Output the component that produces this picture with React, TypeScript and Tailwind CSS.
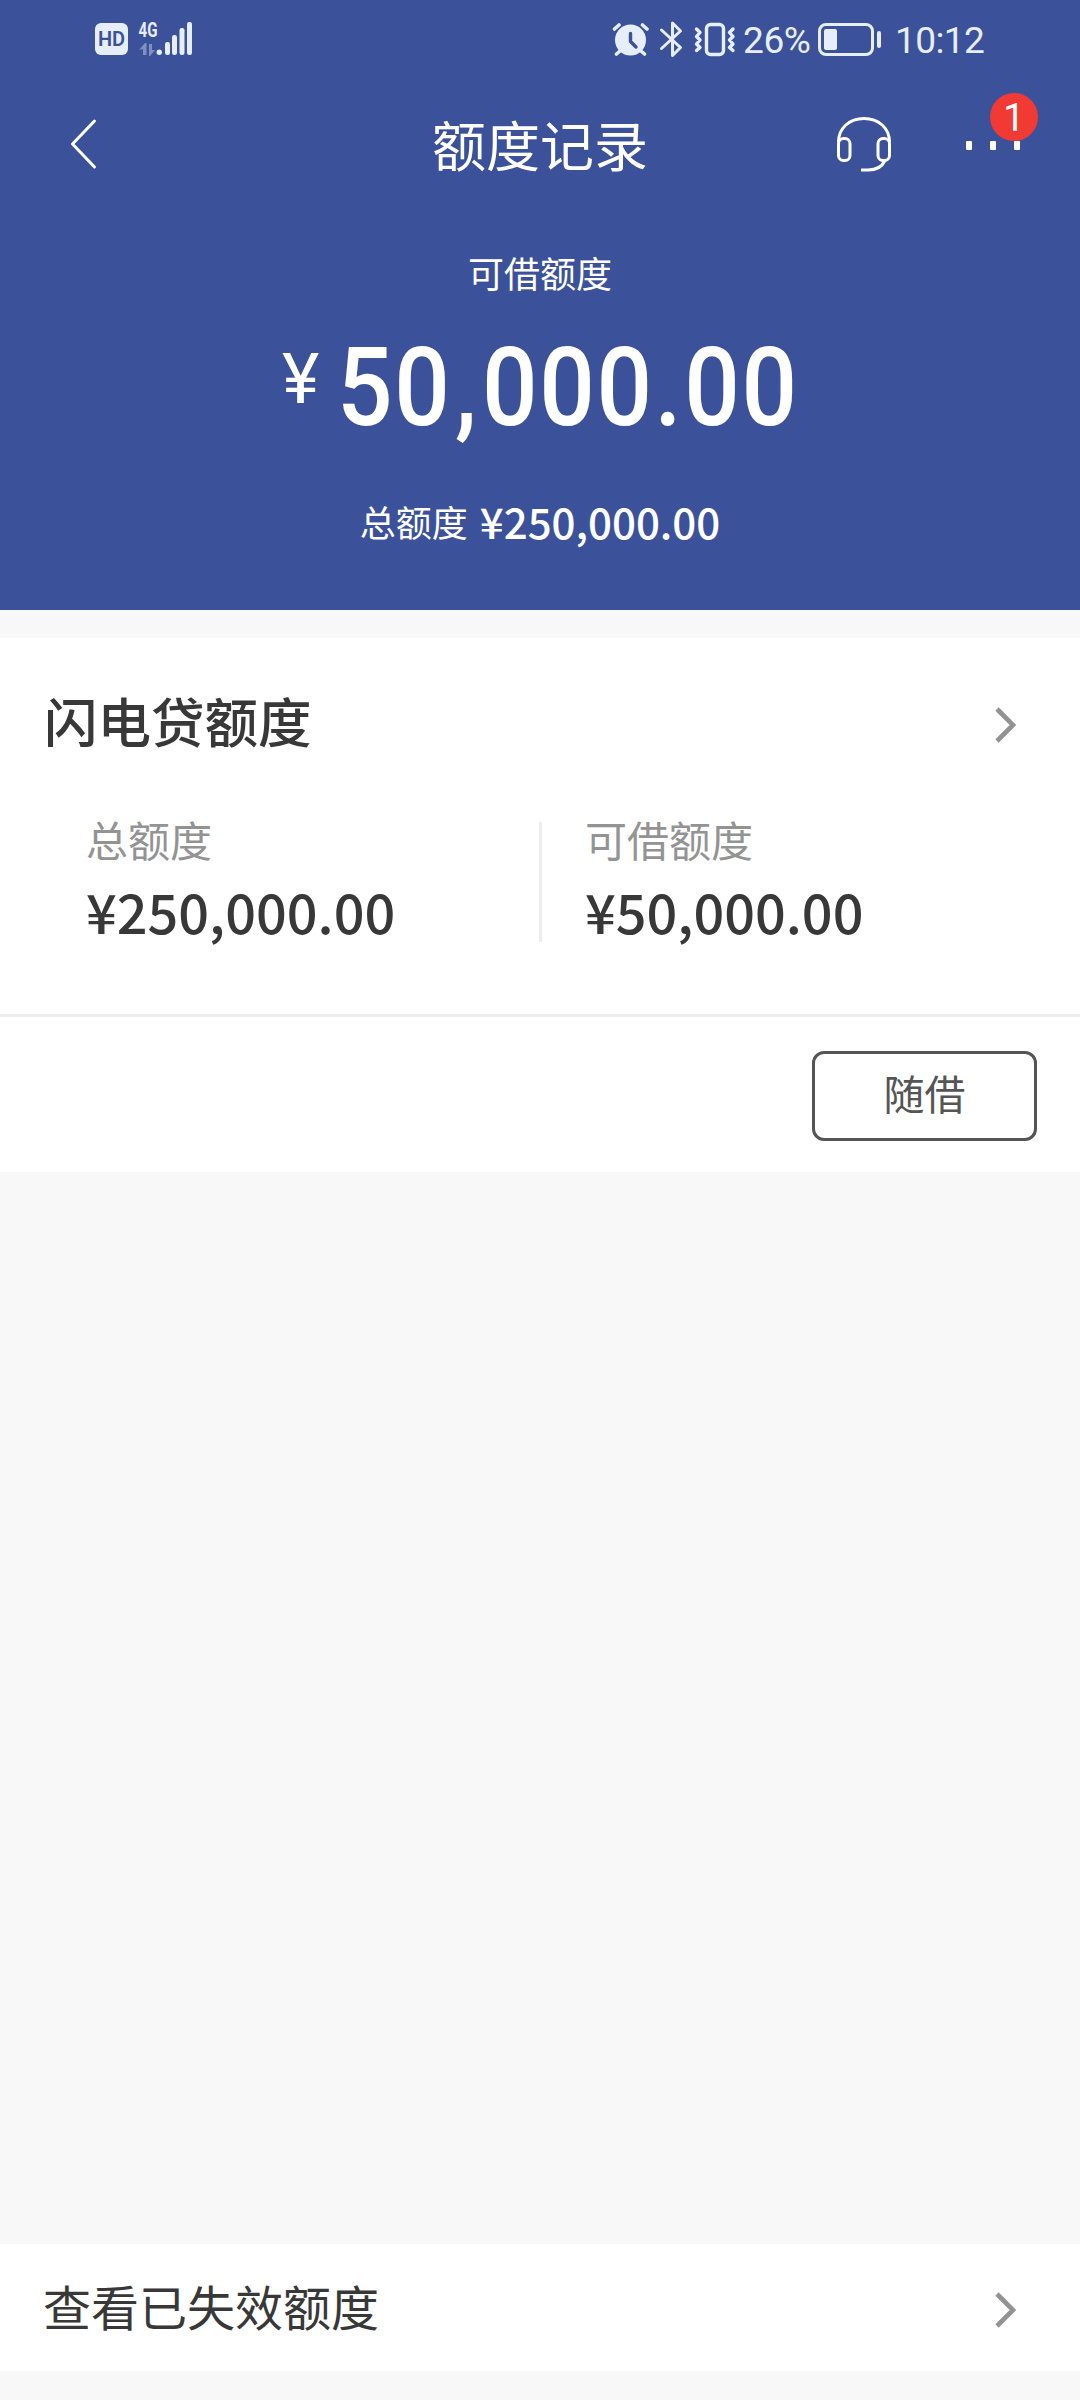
import React from 'react';

const StatusBar: React.FC = () => (
  <div className="flex h-[78px] items-center pl-[95px] pr-[95px] text-[#e6edfb]">
    <div className="flex h-8 w-[33px] items-center justify-center rounded-[6px] bg-[#e6edfb]">
      <span className="font-[Roboto] text-[20px] leading-none font-semibold text-[#3b529b]">HD</span>
    </div>
    <svg className="ml-[9px]" width="56" height="52" viewBox="137 13 56 52" fill="currentColor">
      <text x="138.500" y="37" fontFamily="Roboto" fontSize="21" fontWeight="700" textLength="19" lengthAdjust="spacingAndGlyphs">4G</text>
      <path opacity=".4" d="M139 50l6-7h1.500v12h-3.500v-6zM149 44h3v6h3l-5 6h-1z" />
      <circle cx="159.300" cy="52.300" r="2.700" />
      <rect x="165" y="42" width="5" height="13" rx="2.200" />
      <rect x="172" y="35" width="5" height="20" rx="2.200" />
      <rect x="179.500" y="28" width="5" height="27" rx="2.200" />
      <rect x="187" y="22" width="5" height="33" rx="2.200" />
    </svg>
    <div className="ml-auto flex items-center font-[Roboto]">
      <svg width="124" height="38" viewBox="612 20 124 38" fill="none" stroke="currentColor" strokeLinecap="round" strokeLinejoin="round">
        {/* alarm */}
        <circle cx="630.500" cy="40" r="15.500" fill="currentColor" stroke="none" />
        <path strokeWidth="3.600" d="M614.500 29l4.500-4M642.500 25l4.500 4M620 51l-3.500 3M641 51l3.500 3" />
        <path stroke="#3b529b" strokeWidth="3.400" d="M630.500 33.500v8l5.500 5.500" />
        {/* bluetooth */}
        <path strokeWidth="3" d="M661.500 30l19 17.500-8 8V23l8 8-19 17.500" />
        {/* vibrate */}
        <rect x="706.500" y="24.500" width="17" height="30" rx="4" strokeWidth="3.400" />
        <path strokeWidth="3.400" d="M696.500 29l3.500 3.500-3.500 4 3.500 3.500-3.500 4 3.500 3.500-3.500 3M733 29l-3.500 3.500 3.500 4-3.500 3.500 3.500 4-3.500 3.500 3.500 3" />
      </svg>
      <span className="ml-[7px] w-[69px] pt-[2px] text-[37px] leading-none tracking-[-0.4px] whitespace-nowrap">26%</span>
      <svg className="ml-[5px]" width="64" height="34" viewBox="817 22 64 34" fill="none" stroke="currentColor">
        <rect x="819.500" y="24.500" width="53" height="30" rx="6.500" strokeWidth="3" />
        <rect x="824" y="29" width="13" height="21" rx="2" fill="currentColor" stroke="none" />
        <rect x="877" y="31" width="4" height="17" rx="2" fill="currentColor" stroke="none" />
      </svg>
      <span className="ml-[14px] w-[90px] pt-[3px] text-[37px] leading-none tracking-[-0.6px] whitespace-nowrap">10:12</span>
    </div>
  </div>
);

const NavBar: React.FC = () => (
  <div className="grid h-[132px] grid-cols-[1fr_auto_1fr] items-center pr-[42px] pl-[70px]">
    <button aria-label="返回">
      <svg width="28" height="52" viewBox="70 118 28 52" fill="none" stroke="currentColor" strokeWidth="3" strokeLinecap="round" strokeLinejoin="round">
        <path d="M94.500 121L72.500 144l22 23" />
      </svg>
    </button>
    <h1 className="-ml-[28px] pb-[1px] text-[54px] leading-[56px]">额度记录</h1>
    <div className="flex items-center justify-end">
      <button aria-label="客服">
        <svg width="58" height="58" viewBox="835 115 58 58" fill="none" stroke="currentColor" strokeWidth="3">
          <path d="M838.500 142c0-14 11-23.500 25.500-23.500s25.500 9.500 25.500 23.500" />
          <rect x="838.500" y="138.500" width="11.500" height="22" rx="5" />
          <rect x="878" y="138.500" width="11.500" height="22" rx="5" />
          <path d="M885 160.500c-3 6.500-9 9.500-17 9.500h-7" />
        </svg>
      </button>
      <button className="relative top-[1px] ml-[73px] flex w-[72px] gap-[18px]" aria-label="更多">
        <span className="h-[9px] w-[6px] rounded-[1px] bg-white" />
        <span className="h-[9px] w-[6px] rounded-[1px] bg-white" />
        <span className="h-[9px] w-[6px] rounded-[1px] bg-white" />
        <span className="absolute -top-[48px] left-[24px] flex size-12 items-center justify-center rounded-full bg-[#f23a34] pt-[2px] font-[Roboto] text-[38px] leading-none">
          1
        </span>
      </button>
    </div>
  </div>
);

const Chevron: React.FC = () => (
  <svg className="relative top-[2px]" width="24" height="38" viewBox="0 0 24 38" fill="none" stroke="#939393" strokeWidth="4.600">
    <path d="M3 3l16 16L3 35" />
  </svg>
);

interface AmountProps {
  label: string;
  value: string;
}

const Amount: React.FC<AmountProps> = ({ label, value }) => (
  <div className="flex flex-col">
    <span className="text-[42px] leading-[48px] text-[#939393]">{label}</span>
    <span className="mt-[20px] text-[54px] leading-[56px] font-medium text-[#383838]">{value}</span>
  </div>
);

const App: React.FC = () => (
  <div className="flex h-[2400px] w-[1080px] flex-col bg-[#f8f8f8] font-['Noto_Sans_CJK_SC',sans-serif]">
    <header className="h-[610px] bg-[#3b529b] text-white">
      <StatusBar />
      <NavBar />
      <div className="flex flex-col items-center pt-[40px]">
        <span className="text-[36px] leading-[44px]">可借额度</span>
        <div className="mt-[43px] flex h-[100px] w-[516px] items-start font-[Roboto] font-medium">
          <span className="w-[55px] shrink-0 text-[71px] leading-[84px] font-normal">¥</span>
          <span className="origin-left scale-x-[0.89] pt-[1px] text-[110px] leading-[100px] tracking-[1.900px] whitespace-nowrap">
            50<span className="inline-block w-[34px] text-center">,</span>
            000<span className="inline-block w-[34px] text-center">.</span>
            00
          </span>
        </div>
        <div className="mt-[58px] flex items-center text-[36px] leading-[52px]">
          <span>总额度</span>
          <span className="ml-[12px] text-[42px] font-medium">¥250,000.00</span>
        </div>
      </div>
    </header>

    <section className="mt-[28px] h-[534px] bg-white">
      <div className="flex items-center justify-between pt-[57px] pr-[62px] pl-[44px]">
        <h2 className="-mt-[4px] h-[60px] text-[53.500px] leading-[58px] font-medium text-[#383838]">闪电贷额度</h2>
        <Chevron />
      </div>
      <div className="mt-[64px] flex h-[202px] items-start border-b-[3px] border-[#ededed] pl-[86px]">
        <div className="w-[453px]">
          <Amount label="总额度" value="¥250,000.00" />
        </div>
        <div className="mt-[7px] h-[120px] w-[3px] bg-[#ededed]" />
        <div className="ml-[43px]">
          <Amount label="可借额度" value="¥50,000.00" />
        </div>
      </div>
      <div className="flex justify-end pt-[34px] pr-[43px]">
        <button className="h-[90px] w-[225px] rounded-[12px] border-[3px] border-[#555] pb-[6px] text-[41px] text-[#555]">随借</button>
      </div>
    </section>

    <section className="mt-auto mb-[29px] flex h-[127px] items-center justify-between bg-white pr-[62px] pl-[43px]">
      <span className="pb-[5px] text-[48px] leading-none text-[#383838]">查看已失效额度</span>
      <Chevron />
    </section>
  </div>
);

export default App;
